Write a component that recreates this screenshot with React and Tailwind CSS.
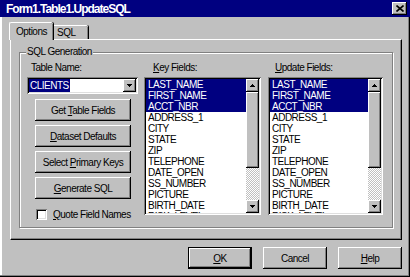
import React from "react";

const fields = [
  "LAST_NAME",
  "FIRST_NAME",
  "ACCT_NBR",
  "ADDRESS_1",
  "CITY",
  "STATE",
  "ZIP",
  "TELEPHONE",
  "DATE_OPEN",
  "SS_NUMBER",
  "PICTURE",
  "BIRTH_DATE",
  "RISK_LEVEL",
];

function UpArrow() {
  return (
    <svg width="5" height="3" viewBox="0 0 5 3" shapeRendering="crispEdges">
      <path d="M2 0h1v1h1v1h1v1H0V2h1V1h1z" fill="#000" />
    </svg>
  );
}
function DownArrow() {
  return (
    <svg width="5" height="3" viewBox="0 0 5 3" shapeRendering="crispEdges">
      <path d="M0 0h5v1H4v1H3v1H2V2H1V1H0z" fill="#000" />
    </svg>
  );
}

function Btn({ children, className = "" }) {
  return (
    <div
      className={
        "flex items-center justify-center bg-[#c0c0c0] shadow-[inset_-1px_-1px_#000,inset_1px_1px_#fff,inset_-2px_-2px_#808080] " +
        className
      }
    >
      {children}
    </div>
  );
}

function Scrollbar() {
  return (
    <div className="flex flex-col w-[13px] h-full">
      <Btn className="h-[13px]">
        <UpArrow />
      </Btn>
      <Btn className="h-[76px]" />
      <div className="flex-1 bg-[repeating-conic-gradient(#c0c0c0_0%_25%,#ffffff_0%_50%)] bg-size-[2px_2px]" />
      <Btn className="h-[13px]">
        <DownArrow />
      </Btn>
    </div>
  );
}

function ListBox({ className }) {
  return (
    <div
      className={
        "flex p-[2px] h-[138px] bg-white shadow-[inset_1px_1px_#808080,inset_-1px_-1px_#fff,inset_2px_2px_#000,inset_-2px_-2px_#dfdfdf] " +
        className
      }
    >
      <div className="flex-1 overflow-hidden">
        {fields.map((f, i) => (
          <div
            key={f}
            className={
              "h-[11px] leading-[11px] pl-[2px] whitespace-nowrap " +
              (i < 3 ? "bg-[#000080] text-white" : "text-black")
            }
          >
            {f}
          </div>
        ))}
      </div>
      <Scrollbar />
    </div>
  );
}

export default function App() {
  return (
    <div className="w-[410px] h-[277px] bg-[#c0c0c0] flex flex-col overflow-hidden font-['Liberation_Sans',Arial,sans-serif] text-[10px] tracking-[-0.5px] text-black shadow-[inset_-1px_-1px_#000,inset_-2px_-2px_#808080,inset_2px_0_#fff]">
      {/* title bar */}
      <div className="h-[17px] bg-[#000080] flex items-center justify-between pl-[6px] pr-[3px]">
        <span className="text-white font-bold text-[12px] tracking-[-1px] leading-none">
          Form1.Table1.UpdateSQL
        </span>
        <Btn className="w-[15px] h-[13px]">
          <svg width="8" height="7" viewBox="0 0 8 7">
            <path d="M0.5 0.5L7.5 6.5M7.5 0.5L0.5 6.5" stroke="#000" strokeWidth="1.6" />
          </svg>
        </Btn>
      </div>

      {/* tabs */}
      <div className="mt-[5px] pl-[10px]">
        <div className="flex items-end h-[17px]">
          <div className="relative z-10 -ml-px -mb-px w-[44px] h-[18px] bg-[#c0c0c0] border-l border-t border-white rounded-tl-[2px] rounded-tr-[2px] shadow-[inset_-1px_0_#808080,1px_0_#000] flex items-center justify-center">
            Options
          </div>
          <div className="w-[34px] h-[14px] ml-px border-t border-white rounded-tr-[2px] shadow-[inset_-1px_0_#808080,1px_0_#000] flex items-center pl-[3px]">
            SQL
          </div>
        </div>

        {/* tab page */}
        <div className="w-[392px] h-[201px] border-l border-t border-white border-r border-b border-r-black border-b-black shadow-[inset_-1px_-1px_#808080] pl-[8px] pt-[12px]">
          {/* group box */}
          <div className="relative w-[374px] h-[176px] border border-[#808080] shadow-[inset_1px_1px_#fff,1px_1px_#fff] pl-[7px] pt-[7px] flex">
            <div className="absolute left-[6px] top-[-7px] bg-[#c0c0c0] px-[1px] leading-[12px]">
              SQL Generation
            </div>

            {/* left column */}
            <div className="w-[111px] flex flex-col">
              <div className="h-[15px] leading-[15px] pl-[4px]">
                Table Name:
              </div>
              <div className="mt-[2px] h-[17px] flex p-[2px] bg-white shadow-[inset_1px_1px_#808080,inset_-1px_-1px_#fff,inset_2px_2px_#000,inset_-2px_-2px_#dfdfdf]">
                <div className="flex-1 flex">
                  <span className="bg-[#000080] text-white px-[1px] w-[41px] leading-[13px]">
                    CLIENTS
                  </span>
                </div>
                <Btn className="w-[13px] h-[13px]">
                  <DownArrow />
                </Btn>
              </div>
              <div className="mt-[5px] ml-[8px] w-[96px] flex flex-col gap-[4px]">
                <Btn className="h-[22px]">
                  <span>
                    Get <u>T</u>able Fields
                  </span>
                </Btn>
                <Btn className="h-[22px]">
                  <span>
                    <u>D</u>ataset Defaults
                  </span>
                </Btn>
                <Btn className="h-[22px]">
                  <span>
                    Select <u>P</u>rimary Keys
                  </span>
                </Btn>
                <Btn className="h-[22px]">
                  <span>
                    <u>G</u>enerate SQL
                  </span>
                </Btn>
              </div>
              <div className="mt-[8px] ml-[9px] flex items-center gap-[6px]">
                <div className="w-[11px] h-[11px] bg-white shadow-[inset_1px_1px_#808080,inset_-1px_-1px_#fff,inset_2px_2px_#000,inset_-2px_-2px_#dfdfdf]" />
                <span>
                  <u>Q</u>uote Field Names
                </span>
              </div>
            </div>

            {/* key fields */}
            <div className="ml-[6px] w-[117px] flex flex-col">
              <div className="h-[15px] leading-[15px] pl-[9px]">
                <u>K</u>ey Fields:
              </div>
              <ListBox className="mt-[2px] w-[117px]" />
            </div>

            {/* update fields */}
            <div className="ml-[7px] w-[115px] flex flex-col">
              <div className="h-[15px] leading-[15px] pl-[7px]">
                <u>U</u>pdate Fields:
              </div>
              <ListBox className="mt-[2px] w-[115px]" />
            </div>
          </div>
        </div>
      </div>

      {/* bottom buttons */}
      <div className="mt-[7px] flex justify-end gap-[11px] pr-[8px]">
        <div className="w-[64px] h-[22px] border border-black">
          <Btn className="w-full h-full">
            <span>
              <u>O</u>K
            </span>
          </Btn>
        </div>
        <Btn className="w-[64px] h-[22px]">Cancel</Btn>
        <Btn className="w-[64px] h-[22px]">
          <span>
            <u>H</u>elp
          </span>
        </Btn>
      </div>
    </div>
  );
}
